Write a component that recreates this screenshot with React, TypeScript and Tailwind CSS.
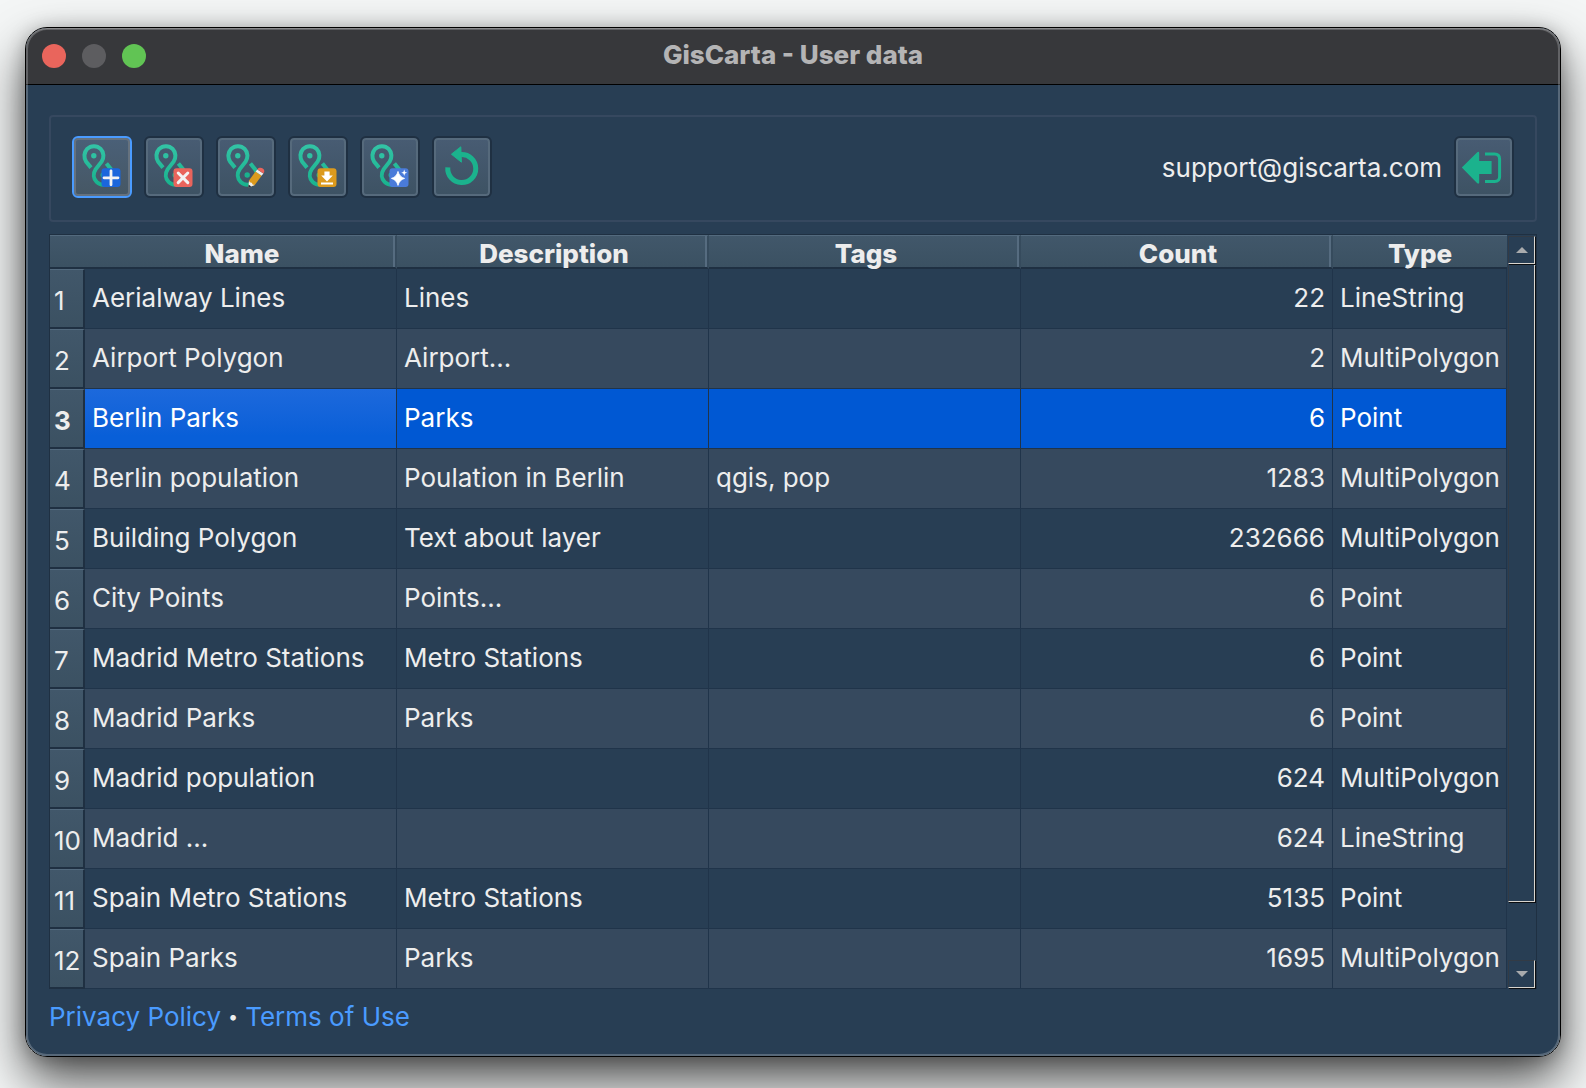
import React from "react";
import clsx from "clsx";

interface Layer {
  name: string;
  description: string;
  tags: string;
  count: number;
  type: string;
}

const layers: Layer[] = [
  { name: "Aerialway Lines", description: "Lines", tags: "", count: 22, type: "LineString" },
  { name: "Airport Polygon", description: "Airport...", tags: "", count: 2, type: "MultiPolygon" },
  { name: "Berlin Parks", description: "Parks", tags: "", count: 6, type: "Point" },
  { name: "Berlin population", description: "Poulation in Berlin", tags: "qgis, pop", count: 1283, type: "MultiPolygon" },
  { name: "Building Polygon", description: "Text about layer", tags: "", count: 232666, type: "MultiPolygon" },
  { name: "City Points", description: "Points...", tags: "", count: 6, type: "Point" },
  { name: "Madrid Metro Stations", description: "Metro Stations", tags: "", count: 6, type: "Point" },
  { name: "Madrid Parks", description: "Parks", tags: "", count: 6, type: "Point" },
  { name: "Madrid population", description: "", tags: "", count: 624, type: "MultiPolygon" },
  { name: "Madrid ...", description: "", tags: "", count: 624, type: "LineString" },
  { name: "Spain Metro Stations", description: "Metro Stations", tags: "", count: 5135, type: "Point" },
  { name: "Spain Parks", description: "Parks", tags: "", count: 1695, type: "MultiPolygon" },
];

// row highlighted in the table
const SELECTED = 2;

const Badge: React.FC<{ fill: string; children: React.ReactNode }> = ({ fill, children }) => (
  <>
    <rect x="29.5" y="32.3" width="19" height="18.8" rx="3" fill={fill} />
    {children}
  </>
);

const LayerIcon: React.FC<{ children: React.ReactNode }> = ({ children }) => (
  <svg viewBox="0 0 60 62" className="w-full h-full" aria-hidden="true">
    <defs>
      <linearGradient id="layer-line" gradientUnits="userSpaceOnUse" x1="0" y1="8" x2="0" y2="52">
        <stop offset="0" stopColor="#33c4a6" />
        <stop offset="1" stopColor="#17b28c" />
      </linearGradient>
    </defs>
    <g fill="none" stroke="url(#layer-line)" strokeWidth="4">
      <path d="M19 31.6 L14.2 25.8 C11.4 21.6 12 16.2 15.2 12.9 C19 9.2 25 9.2 28.6 12.9 C32 16.3 32.3 21.6 29.6 25.6 L23.6 33.4 C20.8 37.6 21.4 42.6 24.6 45.9 C28.4 49.6 34.4 49.6 38 45.9 C41.4 42.5 41.7 37.2 39 33.2 L34.4 27.4" />
    </g>
    <circle cx="21.8" cy="19.7" r="2.7" fill="#2ec1a2" />
    <circle cx="31.2" cy="39" r="2.7" fill="#19b38e" />
    {children}
  </svg>
);

const AddIcon = () => (
  <LayerIcon>
    <Badge fill="#1b66dc">
      <path d="M39 34.8v14M32 41.8h14" stroke="#f2f2f2" strokeWidth="2.8" strokeLinecap="round" />
    </Badge>
  </LayerIcon>
);

const DeleteIcon = () => (
  <LayerIcon>
    <Badge fill="#e9645c">
      <path d="M34.2 37l9.6 9.6M43.8 37l-9.6 9.6" stroke="#f2f2f2" strokeWidth="3" strokeLinecap="round" />
    </Badge>
  </LayerIcon>
);

const EditIcon = () => (
  <LayerIcon>
    <path d="M39.6 35.6L45.6 39.8L38.8 49L32.6 51.4L33 44.6Z" fill="#dc9a1d" />
    <path d="M39.6 35.6L41.4 33.4L47.4 37.6L45.6 39.8Z" fill="#eeeeee" />
    <path d="M41.4 33.4C42.8 31.4 45.2 31.6 46.8 32.6C48.6 34 48.8 35.8 47.4 37.6Z" fill="#e9645c" />
    <path d="M33 44.6L32.4 51.4L38.8 49Q36 49 35.8 46.8Q33.4 47 33 44.6Z" fill="#eeeeee" />
    <path d="M32.6 48.6L32.2 51.8L35.2 50.6Z" fill="#1c2733" />
  </LayerIcon>
);

const DownloadIcon = () => (
  <LayerIcon>
    <Badge fill="#dc9a1d">
      <path d="M36.4 35.4h5.2v4h3.2L39 45.4l-5.8-6h3.2z" fill="#ffffff" />
      <path d="M33 47.6h12" stroke="#ffffff" strokeWidth="2" />
    </Badge>
  </LayerIcon>
);

const StyleIcon = () => (
  <LayerIcon>
    <Badge fill="#4a7bd9">
      <path d="M38 35.4Q39.4 41 44.6 42.4Q39.4 43.8 38 49.4Q36.6 43.8 31.4 42.4Q36.6 41 38 35.4Z" fill="#ffffff" stroke="#ffffff" strokeWidth="0.8" />
      <path d="M44.2 33.6L45 36L47.2 36.8L45 37.6L44.2 40L43.4 37.6L41.2 36.8L43.4 36Z" fill="#ffffff" />
    </Badge>
  </LayerIcon>
);

const RefreshIcon = () => (
  <svg viewBox="0 0 60 62" className="w-full h-full" aria-hidden="true">
    <path d="M15.8 31.4A14 14 0 1 0 29 18.6" fill="none" stroke="#1bb28d" strokeWidth="5" />
    <path d="M28.8 10.8L29.4 26.2L19.4 18.2Z" fill="#1bb28d" stroke="#1bb28d" strokeLinejoin="round" />
  </svg>
);

const LogoutIcon = () => (
  <svg viewBox="0 0 60 62" className="w-full h-full" aria-hidden="true">
    <path d="M7.8 31.6L23 16.4Q25 15 25.2 17V25H37.6V38H25.2V46.4Q25 48.4 23 47Z" fill="#1bb28d" />
    <path d="M31 18H40.6Q45.6 18 45.6 23V40.4Q45.6 45.4 40.6 45.4H31" fill="none" stroke="#1bb28d" strokeWidth="3" />
  </svg>
);

interface ToolButtonProps {
  label: string;
  active?: boolean;
  children: React.ReactNode;
}

const ToolButton: React.FC<ToolButtonProps> = ({ label, active = false, children }) => (
  <button
    type="button"
    aria-label={label}
    className={clsx(
      "w-[60px] h-[62px] shrink-0 rounded-md border-2 bg-linear-to-b",
      active
        ? "from-[#4a6078] to-[#465764] border-[#4a9bff] shadow-[inset_0_0_0_2px_#66727e]"
        : "from-[#485c73] to-[#3d5263] border-[#1f3042] shadow-[inset_0_0_0_2px_#566a7c]"
    )}
  >
    <span className="block -m-0.5">{children}</span>
  </button>
);

const headerCell =
  "h-[34px] p-0 border-t border-t-[#536a7e] border-b-2 border-b-[#1f3042] bg-linear-to-b from-[#41576a] to-[#3b5162] font-extrabold";
const bodyCell = "px-[7px] pb-0.5 border-r border-b border-[#20344a] whitespace-nowrap";

const LayerTable = () => (
  <table className="flex-1 w-full table-fixed border-separate border-spacing-0 text-[26px] leading-8 text-[#ededed]">
    <colgroup>
      <col className="w-[35px]" />
      <col />
      <col />
      <col />
      <col />
      <col className="w-[174px]" />
    </colgroup>
    <thead>
      <tr>
        <th className={headerCell}></th>
        {["Name", "Description", "Tags", "Count", "Type"].map((title) => (
          <th
            key={title}
            scope="col"
            className={clsx(
              headerCell,
              title !== "Type" && "pl-1 border-r-2 border-r-[#364b5d] shadow-[inset_-2px_0_0_#566c80]"
            )}
          >
            <div className="pt-[5px] leading-[26px]">{title}</div>
          </th>
        ))}
      </tr>
    </thead>
    <tbody>
      {layers.map((layer, i) => {
        const selected = i === SELECTED;
        const cell = clsx(
          bodyCell,
          selected ? "bg-[#0058d3] text-white" : i % 2 ? "bg-[#36495e]" : "bg-[#283e54]"
        );
        const textCell = clsx(cell, "overflow-hidden text-ellipsis");
        return (
          <tr key={layer.name} className="h-[60px]">
            <th
              scope="row"
              className={clsx(
                "pl-1 pt-1 pr-0 pb-0 text-left border-t border-t-[#536a7e] border-b-2 border-r-2 border-b-[#1f3042] border-r-[#1f3042] bg-linear-to-b from-[#41576a] to-[#3b5162]",
                selected ? "font-bold" : "font-normal"
              )}
            >
              {i + 1}
            </th>
            <td className={clsx(textCell, selected && "bg-linear-to-b from-[#1c69dc] to-[#085fd8] to-80%")}>
              {layer.name}
            </td>
            <td className={textCell}>{layer.description}</td>
            <td className={textCell}>{layer.tags}</td>
            <td className={clsx(cell, "text-right")}>{layer.count}</td>
            <td className={cell}>{layer.type}</td>
          </tr>
        );
      })}
    </tbody>
  </table>
);

const arrowButton =
  "flex items-center justify-center h-7 w-full border-t border-l border-t-[#333b45] border-l-[#333b45] border-r border-b border-r-[#d8d5cf] border-b-[#d8d5cf] shadow-[1px_1px_0_#0a0d10]";

const ScrollBar = () => (
  <div className="flex flex-col w-[29px] shrink-0 p-px">
    <button type="button" aria-label="Scroll up" className={arrowButton}>
      <svg viewBox="0 0 12 6" className="w-3 h-1.5" aria-hidden="true">
        <path d="M0 6L6 0L12 6Z" fill="#a9abad" />
      </svg>
    </button>
    <div className="flex-1 flex flex-col pt-px">
      <div className="grow-[11] border-l border-l-[#333b45] border-r border-b border-r-[#d8d5cf] border-b-[#d8d5cf] shadow-[1px_1px_0_#0a0d10]"></div>
      <div className="grow"></div>
    </div>
    <button type="button" aria-label="Scroll down" className={arrowButton}>
      <svg viewBox="0 0 12 6" className="w-3 h-1.5" aria-hidden="true">
        <path d="M0 0L6 6L12 0Z" fill="#a9abad" />
      </svg>
    </button>
  </div>
);

const TitleBar = () => (
  <header className="grid grid-cols-3 items-center h-[57px] px-4 bg-[#37383b] border-b border-black">
    <div className="flex gap-4">
      <button type="button" aria-label="Close" className="w-6 h-6 rounded-full bg-[#e9655c]"></button>
      <button type="button" aria-label="Minimize" className="w-6 h-6 rounded-full bg-[#5d5d60]"></button>
      <button type="button" aria-label="Zoom" className="w-6 h-6 rounded-full bg-[#61c454]"></button>
    </div>
    <h1 className="pb-0.5 text-center text-[26px] leading-8 font-extrabold text-[#b4b4b5] whitespace-nowrap">
      GisCarta - User data
    </h1>
  </header>
);

const App: React.FC = () => (
  <div className="min-h-screen pt-[27px] px-[25px] pb-[31px] bg-[#f4f6f6] overflow-hidden font-['Inter','Liberation_Sans',sans-serif]">
    <div className="rounded-[22px] border border-black shadow-[0_24px_50px_rgba(0,0,0,0.68),0_2px_18px_rgba(0,0,0,0.25)]">
      <div className="relative rounded-[21px] overflow-hidden bg-[#283e54]">
        <TitleBar />

        <main className="px-[23px] pt-[30px] pb-[23px]">
          <div className="flex items-center justify-between mb-3 h-[107px] px-[21px] pb-1 border-2 border-[#36485f] rounded-sm">
            <div className="flex gap-3">
              <ToolButton label="Add layer" active>
                <AddIcon />
              </ToolButton>
              <ToolButton label="Delete layer">
                <DeleteIcon />
              </ToolButton>
              <ToolButton label="Edit layer">
                <EditIcon />
              </ToolButton>
              <ToolButton label="Download layer">
                <DownloadIcon />
              </ToolButton>
              <ToolButton label="Layer style">
                <StyleIcon />
              </ToolButton>
              <ToolButton label="Refresh">
                <RefreshIcon />
              </ToolButton>
            </div>
            <div className="flex items-center gap-3">
              <span className="pt-0.5 text-[26px] leading-8 text-[#ededed]">support@giscarta.com</span>
              <ToolButton label="Log out">
                <LogoutIcon />
              </ToolButton>
            </div>
          </div>

          <div className="flex border border-b-0 border-[#1f3042]">
            <LayerTable />
            <ScrollBar />
          </div>

          <footer className="flex items-center gap-[7px] pt-3 text-[26px] leading-8 text-[#ededed]">
            <a href="#privacy" className="text-[#4a9bff]">
              Privacy Policy
            </a>
            <span className="text-lg">•</span>
            <a href="#terms" className="text-[#4a9bff]">
              Terms of Use
            </a>
          </footer>
        </main>

        {/* light rim along the window edge */}
        <div className="absolute inset-0 rounded-[21px] pointer-events-none shadow-[inset_0_0_0_2px_rgba(255,255,255,0.22),inset_0_1px_0_rgba(255,255,255,0.25)]"></div>
      </div>
    </div>
  </div>
);

export default App;
